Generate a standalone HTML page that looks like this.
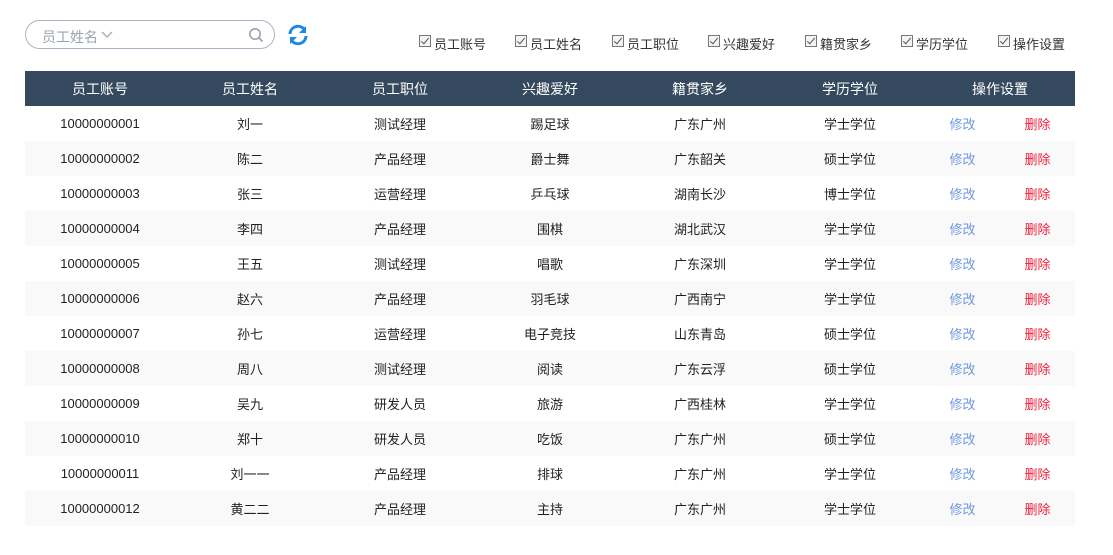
<!DOCTYPE html>
<html><head><meta charset="utf-8"><style>
*{margin:0;padding:0;box-sizing:border-box}
body{width:1113px;height:555px;background:#fff;font-family:"Liberation Sans","Noto Sans CJK SC",sans-serif;font-size:13px;color:#222;position:relative;overflow:hidden}
.search{position:absolute;left:25px;top:20px;width:250px;height:29px;border:1px solid #aab6c6;border-radius:15px}
.search .ph{position:absolute;left:16px;top:6px;color:#9aa3ad;font-size:14px}
.search svg{position:absolute}
.refresh{position:absolute;left:286px;top:23px}
.cbs{position:absolute;top:34px;left:0;width:1113px;height:20px;font-size:13px;color:#333}
.cb{position:absolute;top:0;white-space:nowrap}
.cb i{display:inline-block;width:12px;height:12px;border:1px solid #777;background:#f3f3f3;vertical-align:top;margin-top:1px;margin-right:3px;position:relative}
.cb i:after{content:"";position:absolute;left:3px;top:0px;width:3px;height:7px;border:solid #555;border-width:0 1.5px 1.5px 0;transform:rotate(40deg)}
table{position:absolute;left:25px;top:71px;width:1050px;border-collapse:collapse;table-layout:fixed}
th{height:35px;background:#34495e;color:#fff;font-weight:normal;font-size:14px}
td{height:35px;text-align:center}
tr.alt td{background:#f9f9f9}
.m{color:#6f98e0}.d{color:#f0203a}
</style></head><body>
<div class="search"><span class="ph">员工姓名</span>
<svg style="left:75px;top:10px" width="12" height="8" viewBox="0 0 12 8"><path d="M1 1l5 5 5-5" fill="none" stroke="#a8b0ba" stroke-width="1.5"/></svg>
<svg style="left:222px;top:6px" width="16" height="16" viewBox="0 0 16 16"><circle cx="7" cy="7" r="5.2" fill="none" stroke="#9aa3ad" stroke-width="1.6"/><path d="M11 11l3.5 3.5" stroke="#9aa3ad" stroke-width="1.8"/></svg>
</div>
<svg class="refresh" width="24" height="24" viewBox="0 0 24 24"><path d="M4 11a8 8 0 0 1 14-5" fill="none" stroke="#1e88e5" stroke-width="3"/><path d="M20 3v7h-7z" fill="#1e88e5"/><path d="M20 13a8 8 0 0 1-14 5" fill="none" stroke="#1e88e5" stroke-width="3"/><path d="M4 21v-7h7z" fill="#1e88e5"/></svg>
<div class="cbs">
<span class="cb" style="left:419px"><i></i>员工账号</span>
<span class="cb" style="left:515px"><i></i>员工姓名</span>
<span class="cb" style="left:612px"><i></i>员工职位</span>
<span class="cb" style="left:708px"><i></i>兴趣爱好</span>
<span class="cb" style="left:805px"><i></i>籍贯家乡</span>
<span class="cb" style="left:901px"><i></i>学历学位</span>
<span class="cb" style="left:998px"><i></i>操作设置</span>
</div>
<table>
<colgroup><col style="width:150px"><col style="width:150px"><col style="width:150px"><col style="width:150px"><col style="width:150px"><col style="width:150px"><col style="width:75px"><col style="width:75px"></colgroup>
<tr><th>员工账号</th><th>员工姓名</th><th>员工职位</th><th>兴趣爱好</th><th>籍贯家乡</th><th>学历学位</th><th colspan="2">操作设置</th></tr>
<tr><td>10000000001</td><td>刘一</td><td>测试经理</td><td>踢足球</td><td>广东广州</td><td>学士学位</td><td class="m">修改</td><td class="d">删除</td></tr>
<tr class="alt"><td>10000000002</td><td>陈二</td><td>产品经理</td><td>爵士舞</td><td>广东韶关</td><td>硕士学位</td><td class="m">修改</td><td class="d">删除</td></tr>
<tr><td>10000000003</td><td>张三</td><td>运营经理</td><td>乒乓球</td><td>湖南长沙</td><td>博士学位</td><td class="m">修改</td><td class="d">删除</td></tr>
<tr class="alt"><td>10000000004</td><td>李四</td><td>产品经理</td><td>围棋</td><td>湖北武汉</td><td>学士学位</td><td class="m">修改</td><td class="d">删除</td></tr>
<tr><td>10000000005</td><td>王五</td><td>测试经理</td><td>唱歌</td><td>广东深圳</td><td>学士学位</td><td class="m">修改</td><td class="d">删除</td></tr>
<tr class="alt"><td>10000000006</td><td>赵六</td><td>产品经理</td><td>羽毛球</td><td>广西南宁</td><td>学士学位</td><td class="m">修改</td><td class="d">删除</td></tr>
<tr><td>10000000007</td><td>孙七</td><td>运营经理</td><td>电子竞技</td><td>山东青岛</td><td>硕士学位</td><td class="m">修改</td><td class="d">删除</td></tr>
<tr class="alt"><td>10000000008</td><td>周八</td><td>测试经理</td><td>阅读</td><td>广东云浮</td><td>硕士学位</td><td class="m">修改</td><td class="d">删除</td></tr>
<tr><td>10000000009</td><td>吴九</td><td>研发人员</td><td>旅游</td><td>广西桂林</td><td>学士学位</td><td class="m">修改</td><td class="d">删除</td></tr>
<tr class="alt"><td>10000000010</td><td>郑十</td><td>研发人员</td><td>吃饭</td><td>广东广州</td><td>硕士学位</td><td class="m">修改</td><td class="d">删除</td></tr>
<tr><td>10000000011</td><td>刘一一</td><td>产品经理</td><td>排球</td><td>广东广州</td><td>学士学位</td><td class="m">修改</td><td class="d">删除</td></tr>
<tr class="alt"><td>10000000012</td><td>黄二二</td><td>产品经理</td><td>主持</td><td>广东广州</td><td>学士学位</td><td class="m">修改</td><td class="d">删除</td></tr>
</table>
</body></html>
